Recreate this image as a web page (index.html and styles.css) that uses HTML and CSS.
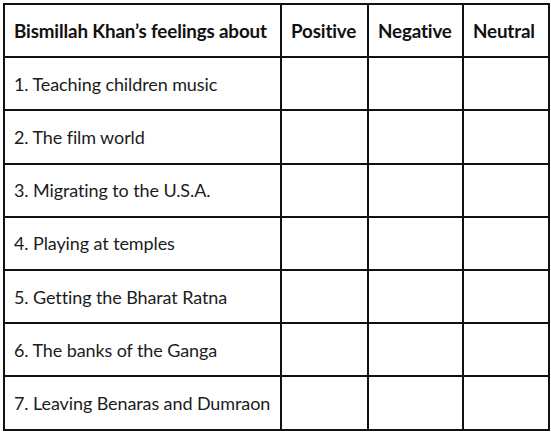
FILE: index.html
```html
<!DOCTYPE html>
<html>
<head>
<meta charset="utf-8">
<link rel="stylesheet" href="styles.css">
</head>
<body>
<table class="sheet">
  <colgroup>
    <col class="c-topic">
    <col class="c-pos">
    <col class="c-neg">
    <col class="c-neu">
  </colgroup>
  <thead>
    <tr>
      <th>Bismillah Khan’s feelings about</th>
      <th>Positive</th>
      <th>Negative</th>
      <th>Neutral</th>
    </tr>
  </thead>
  <tbody>
    <tr><td>1. Teaching children music</td><td></td><td></td><td></td></tr>
    <tr><td>2. The film world</td><td></td><td></td><td></td></tr>
    <tr><td>3. Migrating to the U.S.A.</td><td></td><td></td><td></td></tr>
    <tr><td>4. Playing at temples</td><td></td><td></td><td></td></tr>
    <tr><td>5. Getting the Bharat Ratna</td><td></td><td></td><td></td></tr>
    <tr><td>6. The banks of the Ganga</td><td></td><td></td><td></td></tr>
    <tr><td>7. Leaving Benaras and Dumraon</td><td></td><td></td><td></td></tr>
  </tbody>
</table>
</body>
</html>
```

FILE: styles.css
```css
html, body {
  margin: 0;
  padding: 0;
  background: #ffffff;
}

body {
  padding: 3px;
  font-family: Lato, "Open Sans", sans-serif;
  color: #1c1c1c;
}

.sheet {
  border-collapse: collapse;
  table-layout: fixed;
  width: 545px;
}

.c-topic { width: 277px; }
.c-pos { width: 87px; }
.c-neg { width: 95px; }
.c-neu { width: 86px; }

.sheet th,
.sheet td {
  border: 2px solid #111111;
  height: 51.2px;
  padding: 0 0 0 9px;
  vertical-align: middle;
  text-align: left;
  white-space: nowrap;
}

.sheet th {
  font-weight: 700;
  font-size: 18.8px;
  letter-spacing: -0.15px;
  color: #111111;
}

.sheet td {
  font-size: 18px;
  font-weight: 400;
  letter-spacing: -0.1px;
}
```
